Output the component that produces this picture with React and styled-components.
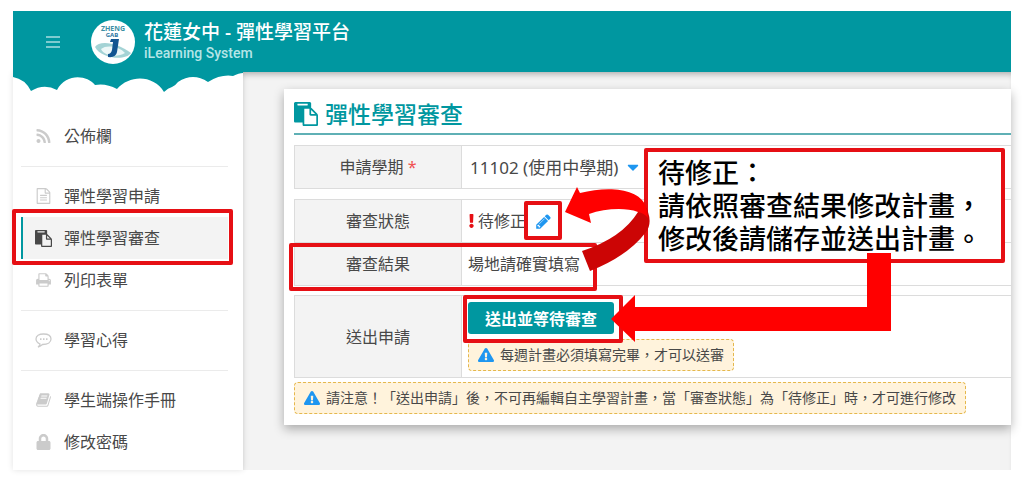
import React from 'react';
import styled, { createGlobalStyle, css } from 'styled-components';
import { FaRss, FaLock, FaExclamation, FaExclamationTriangle, FaCaretDown } from 'react-icons/fa';

const teal = '#0097a0';
const red = '#e60f14';
const blue = '#1e96f0';

const GlobalStyle = createGlobalStyle`
	* {
		box-sizing: border-box;
	}
	body {
		margin: 0;
		background-color: #fff;
		color: #484848;
		font-family: 'Noto Sans', 'Noto Sans CJK TC', sans-serif;
		font-size: 16px;
		line-height: 24px;
	}
`;
const Page = styled.div`
	position: relative;
	padding: 11px 13px;
	overflow: hidden;
`;
const Header = styled.header`
	position: relative;
	z-index: 1;
	display: flex;
	align-items: center;
	height: 61px;
	padding-left: 32px;
	background-color: ${teal};
	color: #fff;
`;
const MenuButton = styled.button`
	display: flex;
	margin: 0 30px 0 0;
	padding: 0;
	border: none;
	background: none;
	color: #a8dde0;
`;
const Brand = styled.div`
	display: flex;
	align-items: center;
	gap: 9px;
`;
const BrandName = styled.h1`
	margin: 0;
	font-size: 19px;
	font-weight: 500;
	line-height: 23px;
`;
const BrandSub = styled.p`
	margin: 0;
	color: #b5e5e7;
	font-family: Roboto, sans-serif;
	font-size: 14px;
	font-weight: 500;
	line-height: 18px;
`;
const Body = styled.div`
	display: flex;
	background-color: #f3f3f3;
`;
const Sidebar = styled.aside`
	flex: 0 0 230px;
	background-color: #fff;
	box-shadow: 0 0 6px rgba(0, 0, 0, 0.12);
`;
const Clouds = styled.svg`
	display: block;
	width: 230px;
	height: 28px;
`;
const Nav = styled.nav`
	padding: 15px 15px 7px 8px;
`;
const NavItem = styled.a`
	position: relative;
	display: flex;
	align-items: center;
	gap: 12px;
	height: 42px;
	padding-left: 12px;
	border-left: 2px solid transparent;
	color: #484848;
	text-decoration: none;

	svg {
		width: 17px;
		height: 16px;
		color: #cbcbcb;
	}

	${({ $active }) =>
		$active &&
		css`
			border-color: ${teal};
			background-color: #f3f3f3;

			svg {
				height: 17px;
				color: #484848;
			}
		`}
`;
const Divider = styled.hr`
	margin: 9px 0 8px;
	border: none;
	border-top: 1px solid #ebebeb;
`;
const Main = styled.main`
	flex: 1;
	min-width: 0;
	padding: 17px 0 45px 41px;
	box-shadow: inset 0 6px 6px -4px rgba(0, 0, 0, 0.3);
`;
const Card = styled.section`
	padding: 10px 0 11px 10px;
	background-color: #fff;
	box-shadow: 0 4px 10px rgba(0, 0, 0, 0.3);
`;
const CardTitle = styled.h2`
	display: flex;
	align-items: center;
	gap: 7px;
	height: 36px;
	margin: 0 0 10px;
	padding-bottom: 4px;
	border-bottom: 2px solid #5fb0b5;
	color: ${teal};
	font-size: 23px;
	font-weight: 500;

	svg {
		width: 24px;
		height: 24px;
	}
`;
const Table = styled.table`
	width: 100%;
	margin-bottom: ${({ $gap }) => $gap}px;
	border-collapse: collapse;
	table-layout: fixed;

	th,
	td {
		height: 43px;
		padding: 0 6px;
		border: 1px solid #dcdcdc;
		border-right: none;
		text-align: left;
	}
	th {
		width: 167px;
		background-color: #f3f3f3;
		font-weight: 400;
		text-align: center;
	}
`;
const Required = styled.span`
	color: #f05050;
`;
const Field = styled.div`
	display: flex;
	align-items: center;
	gap: 0;
	padding-left: 2px;

	svg {
		width: 18px;
		height: 18px;
		color: ${blue};
	}
`;
const TermSelect = styled.select`
	width: 154px;
	padding: 0;
	border: none;
	appearance: none;
	background: none;
	color: #484848;
	font-family: inherit;
	font-size: 17px;
`;
const Status = styled.div`
	display: flex;
	align-items: center;
	gap: 3px;

	> svg {
		width: 7px;
		height: 14px;
		color: ${red};
	}
`;
const EditButton = styled.button`
	position: relative;
	display: flex;
	margin-left: 6px;
	padding: 0;
	border: none;
	background: none;
	color: ${blue};
`;
const Submit = styled.div`
	padding: 6px 0;
`;
const SubmitButton = styled.button`
	display: block;
	width: 146px;
	height: 32px;
	margin-bottom: 5px;
	padding: 0;
	border: none;
	border-radius: 3px;
	background-color: ${teal};
	color: #fff;
	font-family: inherit;
	font-size: 16px;
	font-weight: 600;
`;
const Note = styled.p`
	display: flex;
	align-items: center;
	gap: 6px;
	width: fit-content;
	height: 32px;
	margin: 0;
	padding: 0 9px;
	border: 1px dashed #e5b84c;
	border-radius: 4px;
	background-color: #fff3dc;
	font-size: 14px;
	white-space: nowrap;

	svg {
		width: 16px;
		height: 16px;
		color: ${blue};
	}
`;
const Highlight = styled.span`
	position: absolute;
	top: ${({ $y }) => $y}px;
	left: ${({ $x }) => $x}px;
	z-index: 2;
	width: ${({ $w }) => $w}px;
	height: ${({ $h }) => $h}px;
	border: 4px solid ${red};
	border-radius: 2px;
	pointer-events: none;
`;
const Callout = styled.div`
	position: absolute;
	top: 148px;
	left: 644px;
	z-index: 3;
	width: 361px;
	padding: 4px 0 4px 10px;
	border: 4px solid ${red};
	border-radius: 2px;
	background-color: #fff;
	color: #000;
	font-size: 27px;
	font-weight: 500;
	line-height: 33px;
	white-space: nowrap;
`;
const CalloutLine = styled.p`
	height: 33px;
	margin: 0;
`;
const Arrows = styled.svg`
	position: absolute;
	top: 180px;
	left: 550px;
	z-index: 4;
	pointer-events: none;
`;

const MenuIcon = () => (
	<svg width="16" height="14" viewBox="0 0 16 14" stroke="currentColor" strokeWidth="1.6">
		<path d="M1 2H15M1 7H15M1 12H15" />
	</svg>
);

const Logo = () => (
	<svg width="44" height="44" viewBox="0 0 44 44">
		<circle cx="22" cy="22" r="22" fill="#fff" />
		<path d="M4 27C8 20 26 22 40 33C35 41 10 39 4 27Z" fill="#a4d3d5" />
		<path d="M10 29C16 24 29 27 34 33C26 38 13 36 10 29Z" fill="#eef8f8" />
		<text x="22" y="11" textAnchor="middle" fontSize="7" fontWeight="700" fill="#3d8fa5">
			ZHENG
		</text>
		<text x="21" y="17" textAnchor="middle" fontSize="6" fontWeight="700" fill="#2d759f">
			GAB
		</text>
		<path d="M20 19H28L26 32Q25 38 17 37V34Q20 34 21 30L22 22H19Z" fill="#125591" />
	</svg>
);

const glyphs = {
	paste: 'M768 1664h896v-640h-416q-40 0-68-28t-28-68v-416h-384v1152zm256-1440v-64q0-13-9.5-22.5t-22.5-9.5h-704q-13 0-22.5 9.5t-9.5 22.5v64q0 13 9.5 22.5t22.5 9.5h704q13 0 22.5-9.5t9.5-22.5zm256 672h299l-299-299v299zm512 128v672q0 40-28 68t-68 28h-960q-40 0-68-28t-28-68v-160h-544q-40 0-68-28t-28-68v-1344q0-40 28-68t68-28h1088q40 0 68 28t28 68v328q21 13 36 28l408 408q28 28 48 76t20 88z',
	file: 'M1596 380q28 28 48 76t20 88v1152q0 40-28 68t-68 28h-1344q-40 0-68-28t-28-68v-1600q0-40 28-68t68-28h896q40 0 88 20t76 48zm-444-244v376h376q-10-29-22-41l-313-313q-12-12-41-22zm384 1528v-1024h-416q-40 0-68-28t-28-68v-416h-768v1536h1280zm-1024-864q0-14 9-23t23-9h704q14 0 23 9t9 23v64q0 14-9 23t-23 9h-704q-14 0-23-9t-9-23v-64zm736 224q14 0 23 9t9 23v64q0 14-9 23t-23 9h-704q-14 0-23-9t-9-23v-64q0-14 9-23t23-9h704zm0 256q14 0 23 9t9 23v64q0 14-9 23t-23 9h-704q-14 0-23-9t-9-23v-64q0-14 9-23t23-9h704z',
	printer:
		'M448 1536h896v-256h-896v256zm0-640h896v-384h-160q-40 0-68-28t-28-68v-160h-640v640zm1152 64q0-26-19-45t-45-19-45 19-19 45 19 45 45 19 45-19 19-45zm128 0v416q0 13-9.5 22.5t-22.5 9.5h-224v160q0 40-28 68t-68 28h-960q-40 0-68-28t-28-68v-160h-224q-13 0-22.5-9.5t-9.5-22.5v-416q0-79 56.5-135.5t135.5-56.5h64v-544q0-40 28-68t68-28h672q40 0 88 20t76 48l152 152q28 28 48 76t20 88v256h64q79 0 135.5 56.5t56.5 135.5z',
	book: 'M1703 478q40 57 18 129l-275 906q-19 64-76.5 107.5t-122.5 43.5h-923q-77 0-148.5-53.5t-99.5-131.5q-24-67-2-127 0-4 3-27t4-37q1-8-3-21.5t-3-19.5q2-11 8-21t16.5-23.5 16.5-23.5q23-38 45-91.5t30-91.5q3-10 .5-30t-.5-28q3-11 17-28t17-23q21-36 42-92t25-90q1-9-2.5-32t.5-28q4-13 22-30.5t22-22.5q19-26 42.5-84.500t27.5-96.500q1-8-3-25.500t-2-26.500q2-8 9-18t18-23 17-21q8-12 16.500-30.500t15-35 16-36 19.500-32 26.500-23.500 36-11.500 47.500 5.500l-1 3q38-9 51-9h761q74 0 114 56t18 130l-274 906q-36 119-71.500 153.500t-128.500 34.500h-869q-27 0-38 15-11 16-1 43 24 70 144 70h923q29 0 56-15.500t35-41.500l300-987q7-22 5-57 38 15 59 43zm-1064 2q-4 13 2 22.500t20 9.500h608q13 0 25.500-9.500t16.500-22.500l21-64q4-13-2-22.500t-20-9.500h-608q-13 0-25.500 9.500t-16.500 22.500zm-83 256q-4 13 2 22.500t20 9.500h608q13 0 25.500-9.500t16.500-22.500l21-64q4-13-2-22.500t-20-9.500h-608q-13 0-25.500 9.500t-16.500 22.500z',
	pencil:
		'M491 1536l91-91-235-235-91 91v107h128v128h107zm523-928q0-22-22-22-10 0-17 7l-542 542q-7 7-7 17 0 22 22 22 10 0 17-7l542-542q7-7 7-17zm-54-192l416 416-832 832h-416v-416zm683 96q0 53-37 90l-166 166-416-416 166-165q36-38 90-38 53 0 91 38l235 234q37 39 37 91z',
};

const Glyph = ({ name, size = 16 }) => (
	<svg width={size} height={size} viewBox="0 0 1792 1792" fill="currentColor">
		<path d={glyphs[name]} />
	</svg>
);

const CommentIcon = () => (
	<svg viewBox="0 0 17 16" fill="none" stroke="currentColor" strokeWidth="1.3">
		<path d="M5 12Q1 10 1 7C1 4 4 2 8.500 2S16 4 16 7S13 12.500 7.500 12.500Q5 14.500 3 15Q5 13.500 5 12Z" />
		<path d="M5 7.200H6.500M8 7.200H9.500M11 7.200H12.500" strokeWidth="1.8" />
	</svg>
);

const menu = [
	[{ label: '公佈欄', icon: <FaRss /> }],
	[
		{ label: '彈性學習申請', icon: <Glyph name="file" /> },
		{ label: '彈性學習審查', icon: <Glyph name="paste" />, active: true },
		{ label: '列印表單', icon: <Glyph name="printer" /> },
	],
	[{ label: '學習心得', icon: <CommentIcon /> }],
	[
		{ label: '學生端操作手冊', icon: <Glyph name="book" /> },
		{ label: '修改密碼', icon: <FaLock /> },
	],
];

const App = () => {
	return (
		<Page lang="zh-Hant">
			<GlobalStyle />
			<Header>
				<MenuButton aria-label="選單">
					<MenuIcon />
				</MenuButton>
				<Brand>
					<Logo />
					<div>
						<BrandName>花蓮女中 - 彈性學習平台</BrandName>
						<BrandSub>iLearning System</BrandSub>
					</div>
				</Brand>
			</Header>
			<Body>
				<Sidebar>
					<Clouds viewBox="0 0 230 28">
						<path
							d="M0 0H230V1Q226 1 220 4Q208 2 195 10Q180 0 165 10Q162 14 159 15Q155 16 151 20C141 3 117 2 104 17Q93 11 82 13C74 3 53 1 44 18Q31 11 18 19Q12 7 0 5Z"
							fill={teal}
						/>
					</Clouds>
					<Nav>
						{menu.map((group, index) => (
							<React.Fragment key={group[0].label}>
								{index > 0 && <Divider />}
								{group.map(({ label, icon, active }) => (
									<NavItem key={label} href="#" $active={active}>
										{icon}
										{label}
										{active && <Highlight $x={-11} $y={-8} $w={221} $h={56} />}
									</NavItem>
								))}
							</React.Fragment>
						))}
					</Nav>
				</Sidebar>
				<Main>
					<Card>
						<CardTitle>
							<Glyph name="paste" />
							彈性學習審查
						</CardTitle>
						<Table $gap={10}>
							<tbody>
								<tr>
									<th>
										<label htmlFor="term">
											申請學期 <Required>*</Required>
										</label>
									</th>
									<td>
										<Field>
											<TermSelect id="term">
												<option>11102 (使用中學期)</option>
											</TermSelect>
											<FaCaretDown />
										</Field>
									</td>
								</tr>
							</tbody>
						</Table>
						<Table $gap={9}>
							<tbody>
								<tr>
									<th>審查狀態</th>
									<td>
										<Status>
											<FaExclamation />
											待修正
											<EditButton aria-label="編輯">
												<Glyph name="pencil" size={17} />
												<Highlight $x={-11} $y={-12} $w={38} $h={39} />
											</EditButton>
										</Status>
									</td>
								</tr>
								<tr>
									<th>審查結果</th>
									<td>場地請確實填寫</td>
								</tr>
							</tbody>
						</Table>
						<Table $gap={4}>
							<tbody>
								<tr>
									<th>送出申請</th>
									<td>
										<Submit>
											<SubmitButton>送出並等待審查</SubmitButton>
											<Note>
												<FaExclamationTriangle />
												每週計畫必須填寫完畢，才可以送審
											</Note>
										</Submit>
									</td>
								</tr>
							</tbody>
						</Table>
						<Note>
							<FaExclamationTriangle />
							請注意！「送出申請」後，不可再編輯自主學習計畫，當「審查狀態」為「待修正」時，才可進行修改
						</Note>
					</Card>
				</Main>
			</Body>
			<Highlight $x={289} $y={243} $w={308} $h={48} />
			<Highlight $x={463} $y={295} $w={160} $h={48} />
			<Callout>
				<CalloutLine>待修正：</CalloutLine>
				<CalloutLine>請依照審查結果修改計畫，</CalloutLine>
				<CalloutLine>修改後請儲存並送出計畫。</CalloutLine>
			</Callout>
			<Arrows width="350" height="165" viewBox="0 0 350 165">
				<path d="M32 71Q72 58 88 32Q96 22 98 32Q102 44 96 52Q78 76 40 91Z" fill="#cc0505" />
				<path
					d="M15 32L27 7L30 13C58 6 88 8 96 26Q97 30 98 38Q94 33 88 32C74 27 54 29 39 34L41 43Z"
					fill="#f00"
				/>
				<path d="M317 73H341V151H85V162L61 139L85 115V127H317Z" fill="#f00" />
			</Arrows>
		</Page>
	);
};

export default App;
